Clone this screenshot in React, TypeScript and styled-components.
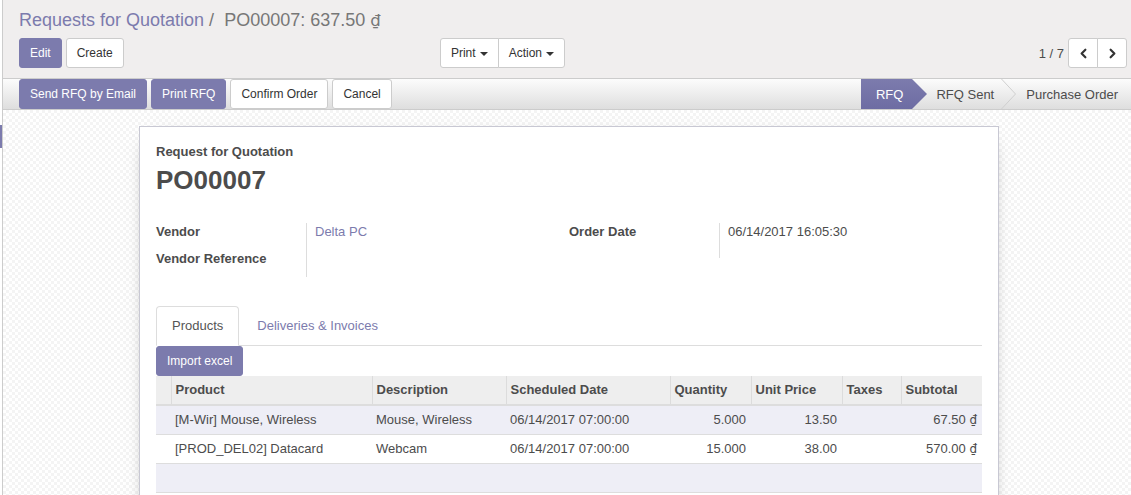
import React from "react";
import styled, { createGlobalStyle } from "styled-components";
import { ChevronLeft, ChevronRight } from "lucide-react";

const GlobalStyle = createGlobalStyle`
  html, body {
    margin: 0;
    padding: 0;
    height: 100%;
  }
  body {
    font-family: "Liberation Sans", Arial, sans-serif;
    font-size: 13px;
    color: #4c4c4c;
    background: #fff;
    overflow: hidden;
  }
  #root {
    height: 100%;
  }
`;

const Shell = styled.div`
  display: flex;
  height: 100vh;
`;

const Rail = styled.div`
  width: 2px;
  flex: none;
  background: #fff;
`;

const RailMarker = styled.div`
  margin-top: 125px;
  height: 23px;
  background: #7c7bad;
`;

const Main = styled.div`
  flex: 1;
  min-width: 0;
  display: flex;
  flex-direction: column;
  border-left: 1px solid #ccc;
`;

const ControlPanel = styled.div`
  background: #f0eeee;
  border-bottom: 1px solid #ccc;
  padding: 5px 4px 10px 16px;
`;

const Breadcrumbs = styled.div`
  font-size: 18px;
  line-height: 30px;
  height: 30px;
  white-space: nowrap;
`;

const Crumb = styled.span`
  color: #7c7bad;
`;

const CrumbSep = styled.span`
  color: #777;
  padding: 0 10px 0 5px;
`;

const CrumbActive = styled.span`
  color: #777;
`;

const Dong = styled.span`
  font-family: "DejaVu Sans", "Liberation Sans", sans-serif;
  font-size: 0.92em;
  line-height: 0;
`;

const ButtonsRow = styled.div`
  display: grid;
  grid-template-columns: 1fr 1fr;
  margin-top: 3px;
`;

const LeftTools = styled.div`
  display: flex;
  justify-content: space-between;
  align-items: center;
  padding-right: 8px;
`;

const RightTools = styled.div`
  display: flex;
  justify-content: flex-end;
  align-items: center;
  gap: 4px;
`;

const ButtonSet = styled.div`
  display: flex;
  gap: 4px;
`;

const Button = styled.button<{ $primary?: boolean }>`
  height: 30px;
  padding: 0 10px;
  font-family: inherit;
  font-size: 12px;
  border-radius: 3px;
  border: 1px solid ${({ $primary }) => ($primary ? "#7c7bad" : "#ccc")};
  background: ${({ $primary }) => ($primary ? "#7c7bad" : "#fff")};
  color: ${({ $primary }) => ($primary ? "#fff" : "#333")};
  display: inline-flex;
  align-items: center;
  gap: 4px;
  white-space: nowrap;
  cursor: pointer;
`;

const Group = styled.div`
  display: flex;

  & > button {
    border-radius: 0;
  }
  & > button + button {
    margin-left: -1px;
  }
  & > button:first-child {
    border-radius: 3px 0 0 3px;
  }
  & > button:last-child {
    border-radius: 0 3px 3px 0;
  }
`;

const Caret = styled.span`
  display: inline-block;
  width: 0;
  height: 0;
  border-top: 4px solid #333;
  border-left: 4px solid transparent;
  border-right: 4px solid transparent;
  margin-top: 1px;
`;

const PagerValue = styled.span`
  color: #4c4c4c;
`;

const PagerButton = styled(Button)`
  width: 30px;
  padding: 0;
  justify-content: center;
`;

const StatusBar = styled.div`
  height: 30px;
  display: flex;
  justify-content: space-between;
  padding-left: 16px;
  background: linear-gradient(to bottom, #fcfcfc, #dedede);
  border-bottom: 1px solid #ccc;
`;

const StatusButton = styled(Button)`
  height: 30px;
`;

const Stages = styled.div`
  display: flex;
  align-items: stretch;
`;

const Stage = styled.div<{ $active?: boolean; $pad: string }>`
  display: flex;
  align-items: center;
  padding: ${({ $pad }) => $pad};
  color: ${({ $active }) => ($active ? "#fff" : "#4c4c4c")};
  background: ${({ $active }) =>
    $active ? "linear-gradient(to bottom, #7c7bad, #6d6ca3)" : "transparent"};
  white-space: nowrap;
`;

const StageArrow = styled.svg`
  display: block;
  flex: none;
`;

const Content = styled.div`
  flex: 1;
  overflow: hidden;
  padding: 16px 0 0 4px;
  background-color: #fff;
  background-image: conic-gradient(#f4f4f4 25%, #fff 0 50%, #f4f4f4 0 75%, #fff 0);
  background-size: 6px 6px;
`;

const Sheet = styled.div`
  width: 860px;
  box-sizing: border-box;
  margin: 0 auto;
  min-height: 520px;
  padding: 16px 16px 40px;
  background: #fff;
  border: 1px solid #c8c8d3;
  box-shadow: 0 5px 20px -15px #000;
`;

const TitleLabel = styled.div`
  font-weight: bold;
  line-height: 18px;
`;

const TitleName = styled.h1`
  margin: 4px 0 0;
  font-size: 26px;
  line-height: 30px;
  font-weight: bold;
  color: #4c4c4c;
`;

const Groups = styled.div`
  display: grid;
  grid-template-columns: 1fr 1fr;
  margin-top: 28px;
`;

const FieldGrid = styled.div`
  display: grid;
  grid-template-columns: 150px 1fr;
  align-content: start;
`;

const FieldLabel = styled.div`
  font-weight: bold;
  line-height: 18px;
  padding-bottom: 9px;
`;

const FieldValue = styled.div<{ $minHeight?: number }>`
  border-left: 1px solid #ddd;
  padding: 0 0 9px 8px;
  line-height: 18px;
  min-height: ${({ $minHeight }) => ($minHeight ? `${$minHeight}px` : "0")};
  box-sizing: border-box;
`;

const LinkValue = styled.span`
  color: #7c7bad;
`;

const Notebook = styled.div`
  margin-top: 29px;
`;

const Tabs = styled.div`
  display: flex;
  border-bottom: 1px solid #ddd;
`;

const Tab = styled.div<{ $active?: boolean }>`
  padding: 10px 15px;
  line-height: 18px;
  margin-right: 2px;
  margin-bottom: -1px;
  border: 1px solid ${({ $active }) => ($active ? "#ddd" : "transparent")};
  border-bottom-color: ${({ $active }) => ($active ? "#fff" : "transparent")};
  border-radius: 4px 4px 0 0;
  background: ${({ $active }) => ($active ? "#fff" : "transparent")};
  color: ${({ $active }) => ($active ? "#555" : "#7c7bad")};
`;

const Table = styled.table`
  width: 100%;
  table-layout: fixed;
  border-collapse: collapse;
`;

const Th = styled.th`
  text-align: left;
  font-weight: bold;
  padding: 5px 5px 5px 4px;
  line-height: 18px;
  background: #eee;
  border-bottom: 2px solid #ddd;
  border-left: 1px solid #dcdcdc;
  white-space: nowrap;
  overflow: hidden;

  &:first-child {
    border-left: none;
  }
`;

const Tr = styled.tr<{ $striped?: boolean }>`
  background: ${({ $striped }) => ($striped ? "#eeeef6" : "#fff")};
`;

const Td = styled.td<{ $num?: boolean }>`
  padding: 5px 5px 5px 4px;
  line-height: 18px;
  height: 18px;
  border-bottom: 1px solid #ddd;
  text-align: ${({ $num }) => ($num ? "right" : "left")};
  white-space: nowrap;
  overflow: hidden;
`;

const columns = [15, 201, 134, 164, 81, 91, 59, 81];

const headers = ["", "Product", "Description", "Scheduled Date", "Quantity", "Unit Price", "Taxes", "Subtotal"];

const lines = [
  {
    product: "[M-Wir] Mouse, Wireless",
    description: "Mouse, Wireless",
    date: "06/14/2017 07:00:00",
    qty: "5.000",
    price: "13.50",
    subtotal: "67.50",
  },
  {
    product: "[PROD_DEL02] Datacard",
    description: "Webcam",
    date: "06/14/2017 07:00:00",
    qty: "15.000",
    price: "38.00",
    subtotal: "570.00",
  },
];

export default function App() {
  return (
    <>
      <GlobalStyle />
      <Shell>
        <Rail>
          <RailMarker />
        </Rail>
        <Main>
          <ControlPanel>
            <Breadcrumbs>
              <Crumb>Requests for Quotation</Crumb>
              <CrumbSep>/</CrumbSep>
              <CrumbActive>
                PO00007: 637.50 <Dong>₫</Dong>
              </CrumbActive>
            </Breadcrumbs>
            <ButtonsRow>
              <LeftTools>
                <ButtonSet>
                  <Button $primary>Edit</Button>
                  <Button>Create</Button>
                </ButtonSet>
                <Group>
                  <Button>
                    Print <Caret />
                  </Button>
                  <Button>
                    Action <Caret />
                  </Button>
                </Group>
              </LeftTools>
              <RightTools>
                <PagerValue>1 / 7</PagerValue>
                <Group>
                  <PagerButton>
                    <ChevronLeft size={15} strokeWidth={3.5} color="#333" />
                  </PagerButton>
                  <PagerButton>
                    <ChevronRight size={15} strokeWidth={3.5} color="#333" />
                  </PagerButton>
                </Group>
              </RightTools>
            </ButtonsRow>
          </ControlPanel>

          <StatusBar>
            <ButtonSet>
              <StatusButton $primary>Send RFQ by Email</StatusButton>
              <StatusButton $primary>Print RFQ</StatusButton>
              <StatusButton>Confirm Order</StatusButton>
              <StatusButton>Cancel</StatusButton>
            </ButtonSet>
            <Stages>
              <Stage $active $pad="0 9px 0 15px">RFQ</Stage>
              <StageArrow width="15" height="30" viewBox="0 0 15 30">
                <defs>
                  <linearGradient id="stageFill" x1="0" y1="0" x2="0" y2="1">
                    <stop offset="0" stopColor="#7c7bad" />
                    <stop offset="1" stopColor="#6d6ca3" />
                  </linearGradient>
                </defs>
                <polygon points="0,0 15,15 0,30" fill="url(#stageFill)" />
              </StageArrow>
              <Stage $pad="0 7px 0 9px">RFQ Sent</Stage>
              <StageArrow width="15" height="30" viewBox="0 0 15 30">
                <polyline points="0.5,0 14.5,15 0.5,30" fill="none" stroke="#cfcfcf" strokeWidth="1" />
              </StageArrow>
              <Stage $pad="0 13px 0 10px">Purchase Order</Stage>
            </Stages>
          </StatusBar>

          <Content>
            <Sheet>
              <TitleLabel>Request for Quotation</TitleLabel>
              <TitleName>PO00007</TitleName>

              <Groups>
                <FieldGrid>
                  <FieldLabel>Vendor</FieldLabel>
                  <FieldValue>
                    <LinkValue>Delta PC</LinkValue>
                  </FieldValue>
                  <FieldLabel>Vendor Reference</FieldLabel>
                  <FieldValue />
                </FieldGrid>
                <FieldGrid>
                  <FieldLabel>Order Date</FieldLabel>
                  <FieldValue $minHeight={35}>06/14/2017 16:05:30</FieldValue>
                </FieldGrid>
              </Groups>

              <Notebook>
                <Tabs>
                  <Tab $active>Products</Tab>
                  <Tab>Deliveries &amp; Invoices</Tab>
                </Tabs>
                <Button $primary>Import excel</Button>
                <Table>
                  <colgroup>
                    {columns.map((w, i) => (
                      <col key={i} style={{ width: w }} />
                    ))}
                  </colgroup>
                  <thead>
                    <tr>
                      {headers.map((h, i) => (
                        <Th key={i}>{h}</Th>
                      ))}
                    </tr>
                  </thead>
                  <tbody>
                    {lines.map((l, i) => (
                      <Tr key={i} $striped={i % 2 === 0}>
                        <Td />
                        <Td>{l.product}</Td>
                        <Td>{l.description}</Td>
                        <Td>{l.date}</Td>
                        <Td $num>{l.qty}</Td>
                        <Td $num>{l.price}</Td>
                        <Td />
                        <Td $num>
                          {l.subtotal} <Dong>₫</Dong>
                        </Td>
                      </Tr>
                    ))}
                    <Tr $striped>
                      <Td colSpan={8}>&nbsp;</Td>
                    </Tr>
                  </tbody>
                </Table>
              </Notebook>
            </Sheet>
          </Content>
        </Main>
      </Shell>
    </>
  );
}
